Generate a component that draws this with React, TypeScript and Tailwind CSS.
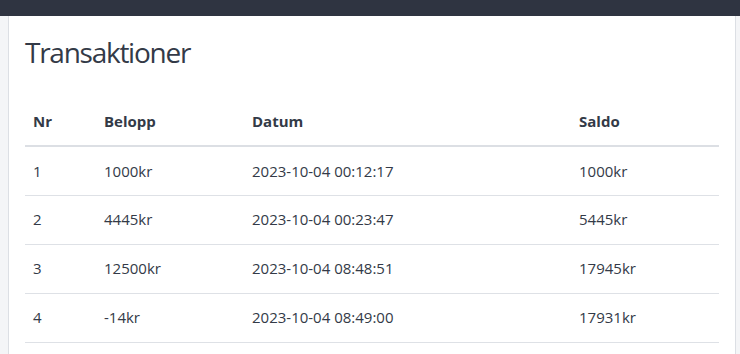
const rows = [
  { nr: 1, amount: "1000kr", date: "2023-10-04 00:12:17", balance: "1000kr" },
  { nr: 2, amount: "4445kr", date: "2023-10-04 00:23:47", balance: "5445kr" },
  { nr: 3, amount: "12500kr", date: "2023-10-04 08:48:51", balance: "17945kr" },
  { nr: 4, amount: "-14kr", date: "2023-10-04 08:49:00", balance: "17931kr" },
];

export default function App() {
  return (
    <div className="flex h-[354px] w-[740px] flex-col overflow-hidden bg-[#f4f5f7] font-['Open_Sans',sans-serif] text-[#333a47]">
      <header className="h-4 shrink-0 bg-[#2f3441]" />
      <div className="flex flex-1 pl-2 pr-1">
        <main className="flex-1 border-x border-[#dcdfe4] bg-white px-4 pt-[19px]">
          <h1 className="text-[28px] leading-[34px] tracking-[-0.045em] text-[#333a47]">Transaktioner</h1>

          <table className="mt-[28px] w-full table-fixed border-collapse text-left text-[15px]">
            <colgroup>
              <col className="w-[71px]" />
              <col className="w-[148px]" />
              <col className="w-[327px]" />
              <col />
            </colgroup>
            <thead>
              <tr className="border-b-2 border-[#dcdfe4]">
                <th className="h-[49px] px-2 font-bold">Nr</th>
                <th className="h-[49px] px-2 font-bold">Belopp</th>
                <th className="h-[49px] px-2 font-bold">Datum</th>
                <th className="h-[49px] px-2 font-bold">Saldo</th>
              </tr>
            </thead>
            <tbody>
              {rows.map((r) => (
                <tr key={r.nr} className="border-b border-[#dee1e6]">
                  <td className="h-[49px] px-2">{r.nr}</td>
                  <td className="h-[49px] px-2">{r.amount}</td>
                  <td className="h-[49px] px-2">{r.date}</td>
                  <td className="h-[49px] px-2">{r.balance}</td>
                </tr>
              ))}
            </tbody>
          </table>
        </main>
      </div>
    </div>
  );
}
